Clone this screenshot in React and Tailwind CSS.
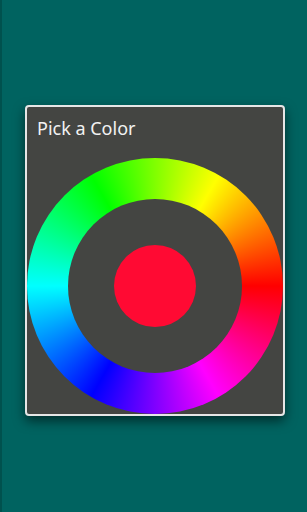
import React from 'react';

// Color picker dialog: hue ring with the currently picked colour in the middle.
export default function App() {
  return (
    <div className="min-h-[512px] w-full bg-[#006360] border-l-2 border-[#00514e] pt-[105px] pl-[23px] font-['Noto_Sans','Open_Sans',sans-serif]">
      <div className="w-[260px] rounded-[4px] border-2 border-[#e6e6e6] bg-[#444542] shadow-[0_5px_12px_rgba(0,0,0,0.55)] overflow-hidden">
        <div className="pl-[10px] pt-[9px] pb-[18px] text-[18px] leading-[24px] text-[#f2f2f2]">
          Pick a Color
        </div>
        <div className="flex justify-center">
          <div className="w-[256px] h-[256px] rounded-full flex items-center justify-center bg-[conic-gradient(from_0deg,#80ff00,#ffff00_30deg,#ff0000_90deg,#ff00ff_150deg,#0000ff_210deg,#00ffff_270deg,#00ff00_330deg,#80ff00_360deg)]">
            <div className="w-[174px] h-[174px] rounded-full bg-[#444542] flex items-center justify-center">
              <div className="w-[82px] h-[82px] rounded-full bg-[#ff0a33]" />
            </div>
          </div>
        </div>
      </div>
    </div>
  );
}
